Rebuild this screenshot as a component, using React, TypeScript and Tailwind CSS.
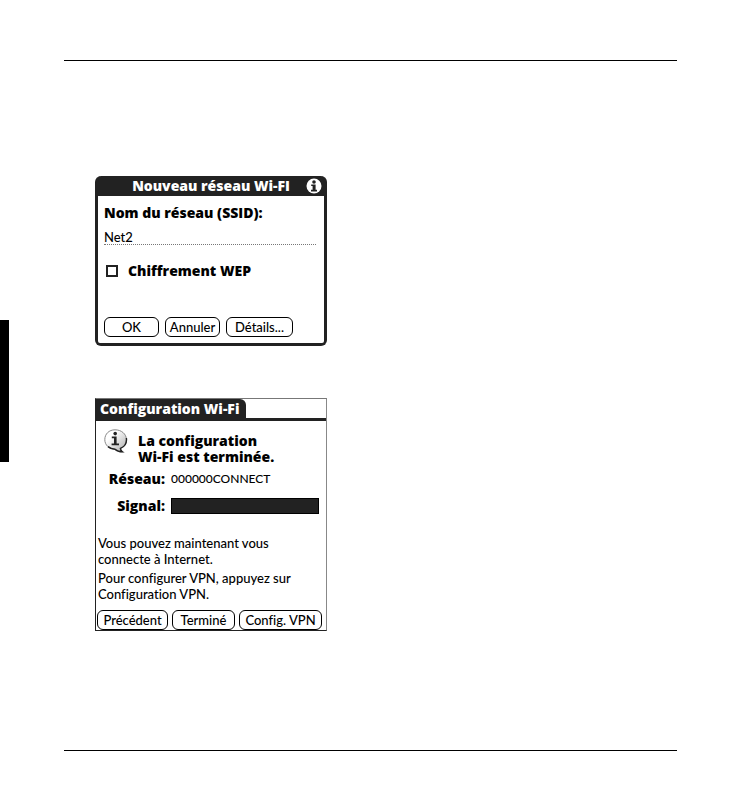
import React from 'react'

const PillButton = ({ className, children }: { className: string; children: React.ReactNode }) => (
  <button
    type="button"
    className={`h-5 shrink-0 rounded-md border border-black bg-white text-[13px] leading-4 font-medium whitespace-nowrap flex items-center justify-center ${className}`}
  >
    {children}
  </button>
)

const InfoDot = () => (
  <svg viewBox="0 0 16 16" className="w-4 h-4">
    <circle cx="8" cy="8" r="7.5" fill="#fff" />
    <circle cx="8" cy="4" r="1.8" fill="#222" />
    <path d="M5.2 6.4H9.6V11.8H11V13.4H5V11.8H6.6V8H5.2Z" fill="#222" />
  </svg>
)

const InfoBubble = () => (
  <svg viewBox="0 0 24 24" className="w-6 h-6 shrink-0">
    <defs>
      <linearGradient id="bubble" x1="0" y1="0" x2="1" y2="1">
        <stop offset="0.3" stopColor="#fff" />
        <stop offset="1" stopColor="#aaa" />
      </linearGradient>
    </defs>
    <path
      d="M11 0.8C17.5 0.8 22.4 5 22.4 10.6C22.4 14.8 20 18 16.4 19.4C16.6 21 17.2 22 18.4 22.8C15 22.8 12.4 21.6 11 20.2C5 20 0.8 16 0.8 10.6C0.8 5 5 0.8 11 0.8Z"
      fill="url(#bubble)"
      stroke="#888"
    />
    <path
      d="M22.4 9C23 14 20.6 17.8 16.4 19.4C16.6 21 17.2 22 18.4 22.8C15 22.8 12.4 21.6 11 20.2C8 20.2 5.6 19 4 17.6"
      fill="none"
      stroke="#222"
      strokeWidth="1.4"
    />
    <circle cx="11.2" cy="4.6" r="1.8" fill="#222" />
    <path d="M7.8 7.6H12.6V14.6H15V16.2H7.6V14.6H10V9.2H7.8Z" fill="#222" />
  </svg>
)

const NetworkDialog = () => (
  <section className="w-58 rounded-md border-3 border-t-0 border-[#222] bg-[#222]">
    <header className="relative flex h-5 items-center justify-center text-white">
      <h2 className="text-sm leading-4 font-extrabold font-['Open_Sans',sans-serif]">Nouveau réseau Wi-FI</h2>
      <span className="absolute right-0.5 top-0.5">
        <InfoDot />
      </span>
    </header>
    <form className="rounded-b-xs bg-white px-1.5 pt-[7px] pb-1.5">
      <label htmlFor="ssid" className="block text-sm leading-5 font-extrabold font-['Open_Sans',sans-serif]">
        Nom du réseau (SSID):
      </label>
      <input
        id="ssid"
        type="text"
        defaultValue="Net2"
        className="mt-1.5 block h-4 w-[212px] border-b border-dotted border-[#777] text-[13px] leading-4 font-medium outline-none"
      />
      <label className="mt-[18px] flex h-4 items-center gap-2.5 pl-0.5 text-sm leading-4 font-extrabold font-['Open_Sans',sans-serif]">
        <input type="checkbox" className="h-3 w-3 appearance-none border-2 border-[#222]" />
        Chiffrement WEP
      </label>
      <div className="mt-[38px] flex gap-1.5">
        <PillButton className="w-[55px]">OK</PillButton>
        <PillButton className="w-[55px]">Annuler</PillButton>
        <PillButton className="w-[67px]">Détails...</PillButton>
      </div>
    </form>
  </section>
)

const SetupPanel = () => (
  <section className="w-58 border border-t-[#777] border-r-[#888] border-b-[#222] border-l-[#222] bg-white">
    <header className="border-b-3 border-[#222]">
      <h2 className="flex h-[19px] w-[150px] items-center rounded-tr-md bg-[#222] pl-1 text-sm leading-4 font-extrabold whitespace-nowrap text-white font-['Open_Sans',sans-serif]">
        Configuration Wi-Fi
      </h2>
    </header>
    <div className="mt-2 flex gap-2.5 pl-2">
      <InfoBubble />
      <p className="pt-1 text-sm leading-4 font-extrabold font-['Open_Sans',sans-serif]">
        La configuration
        <br />
        Wi-Fi est terminée.
      </p>
    </div>
    <dl className="grid auto-rows-[27px] grid-cols-[69px_148px] items-center gap-x-1.5 text-sm leading-4">
      <dt className="text-right font-extrabold font-['Open_Sans',sans-serif]">Réseau:</dt>
      <dd className="text-xs leading-4 font-medium">000000CONNECT</dd>
      <dt className="text-right font-extrabold font-['Open_Sans',sans-serif]">Signal:</dt>
      <dd className="h-4 border border-black bg-[#222]" />
    </dl>
    <div className="mt-4 pl-0.5 text-[13px] leading-4 font-medium">
      <p>
        Vous pouvez maintenant vous
        <br />
        connecte à Internet.
      </p>
      <p className="mt-[3px]">
        Pour configurer VPN, appuyez sur
        <br />
        Configuration VPN.
      </p>
    </div>
    <div className="mt-2 flex gap-1 pl-px">
      <PillButton className="w-[71px]">Précédent</PillButton>
      <PillButton className="w-[63px]">Terminé</PillButton>
      <PillButton className="w-[83px]">Config. VPN</PillButton>
    </div>
  </section>
)

const App = () => (
  <div className="flex bg-white font-['Lato',sans-serif] text-black [font-variant-ligatures:none]">
    {/* Chapter tab on the outer edge */}
    <div className="mt-80 h-[142px] w-[9px] shrink-0 bg-black" />
    <main className="mt-15 mr-[61px] mb-10 ml-[55px] flex-1 border-y border-black pt-[115px] pb-[119px] pl-[31px]">
      <NetworkDialog />
      <div className="mt-13">
        <SetupPanel />
      </div>
    </main>
  </div>
)

export default App
